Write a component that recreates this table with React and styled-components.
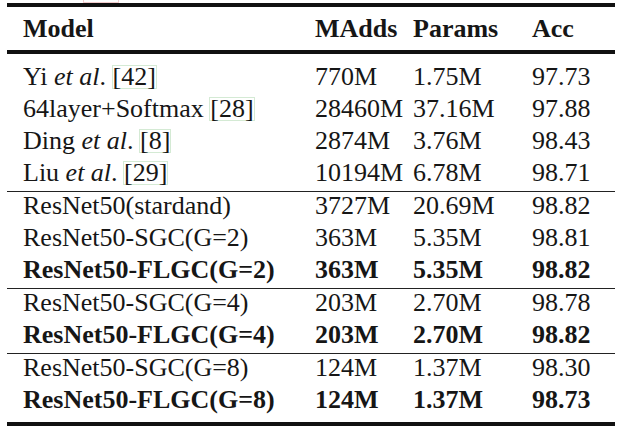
import React from "react";
import styled, { createGlobalStyle } from "styled-components";

const Global = createGlobalStyle`
  html, body { margin: 0; padding: 0; background: #fff; }
  body { font-family: "Liberation Serif", "Times New Roman", serif; color: #161616; }
`;

const Page = styled.div`
  position: relative;
  width: 640px;
  height: 441px;
  padding: 3px 25px 0 7px;
  box-sizing: border-box;
  background: #fff;
  overflow: hidden;
`;

const LinkFragment = styled.div`
  position: absolute;
  left: 83px;
  top: -20px;
  width: 34px;
  height: 21px;
  border: 1px solid #f2cccc;
`;

const Table = styled.div`
  width: 608px;
  border-top: 4px solid #111;
  border-bottom: 4px solid #111;
  font-family: "Liberation Serif", "Times New Roman", serif;
  font-size: 26px;
`;

const Head = styled.div`
  padding: 8px 0 7px;
  border-bottom: 4px solid #111;
`;

const Section = styled.div`
  display: flex;
  flex-direction: column;
  gap: 4px;
  padding: ${(p) => p.$pt || 0}px 0 ${(p) => p.$pb || 4}px;
  & + & { border-top: 1px solid #222; }
`;

const Row = styled.div`
  display: grid;
  grid-template-columns: 292px 98px 119px 1fr;
  padding-left: 16px;
  line-height: 28px;
  height: 28px;
  white-space: nowrap;
  font-weight: ${(p) => (p.$bold ? "bold" : "normal")};
`;

const Cell = styled.div``;

const Cite = styled.span`
  display: inline-block;
  line-height: 22px;
  border: 1px solid #d4ead4;
  margin: 0 -1px;
`;

const Em = styled.i``;

const sections = [
  {
    pt: 9,
    rows: [
      { model: <>Yi <Em>et al</Em>. <Cite>[42]</Cite></>, m: "770M", p: "1.75M", a: "97.73" },
      { model: <>64layer+Softmax <Cite>[28]</Cite></>, m: "28460M", p: "37.16M", a: "97.88" },
      { model: <>Ding <Em>et al</Em>. <Cite>[8]</Cite></>, m: "2874M", p: "3.76M", a: "98.43" },
      { model: <>Liu <Em>et al</Em>. <Cite>[29]</Cite></>, m: "10194M", p: "6.78M", a: "98.71" },
    ],
  },
  {
    rows: [
      { model: "ResNet50(stardand)", m: "3727M", p: "20.69M", a: "98.82" },
      { model: "ResNet50-SGC(G=2)", m: "363M", p: "5.35M", a: "98.81" },
      { model: "ResNet50-FLGC(G=2)", m: "363M", p: "5.35M", a: "98.82", bold: true },
    ],
  },
  {
    rows: [
      { model: "ResNet50-SGC(G=4)", m: "203M", p: "2.70M", a: "98.78" },
      { model: "ResNet50-FLGC(G=4)", m: "203M", p: "2.70M", a: "98.82", bold: true },
    ],
  },
  {
    pb: 8,
    rows: [
      { model: "ResNet50-SGC(G=8)", m: "124M", p: "1.37M", a: "98.30" },
      { model: "ResNet50-FLGC(G=8)", m: "124M", p: "1.37M", a: "98.73", bold: true },
    ],
  },
];

export default function App() {
  return (
    <>
      <Global />
      <Page>
        <LinkFragment />
        <Table>
          <Head>
            <Row $bold>
              <Cell>Model</Cell>
              <Cell>MAdds</Cell>
              <Cell>Params</Cell>
              <Cell>Acc</Cell>
            </Row>
          </Head>
          {sections.map((s, i) => (
            <Section key={i} $pt={s.pt} $pb={s.pb}>
              {s.rows.map((r, j) => (
                <Row key={j} $bold={r.bold}>
                  <Cell>{r.model}</Cell>
                  <Cell>{r.m}</Cell>
                  <Cell>{r.p}</Cell>
                  <Cell>{r.a}</Cell>
                </Row>
              ))}
            </Section>
          ))}
        </Table>
      </Page>
    </>
  );
}
